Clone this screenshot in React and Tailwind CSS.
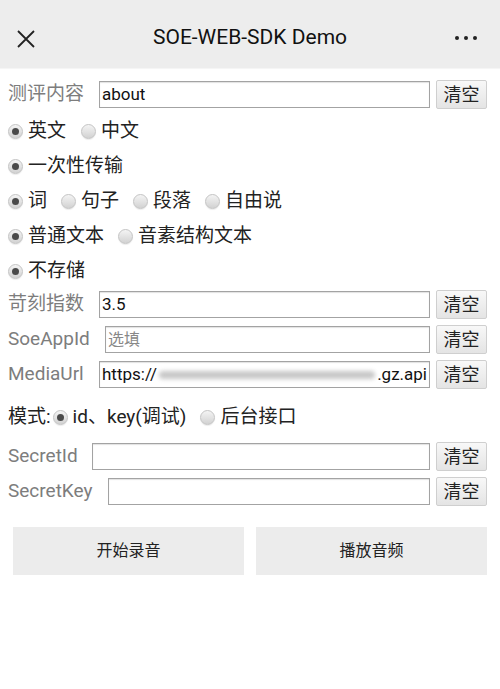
const font = "font-['Roboto','Noto_Sans_CJK_SC',sans-serif]";

const Radio = ({ checked }) => (
  <span className="mr-[5px] flex h-[15px] w-[15px] shrink-0 items-center justify-center rounded-full border border-[#c4c4c4] bg-gradient-to-b from-[#f4f4f4] to-[#d2d2d2] shadow-[0_1px_1px_rgba(0,0,0,0.08)]">
    {checked && <span className="h-[7px] w-[7px] rounded-full bg-[#4a4a4a]" />}
  </span>
);

const Option = ({ checked, children, className = "" }) => (
  <span className={`flex items-center ${className}`}>
    <Radio checked={checked} />
    <span>{children}</span>
  </span>
);

const ClearButton = () => (
  <button className="ml-[6px] h-[29px] w-[51px] shrink-0 rounded-[2px] border border-[#cfcfcf] bg-gradient-to-b from-[#f8f8f8] to-[#e4e4e4] text-[18px] leading-none text-[#222]">
    清空
  </button>
);

const Field = ({ label, labelWidth, children }) => (
  <div className="flex h-[35px] items-center pl-[8px] pr-[13px]">
    <span className={`shrink-0 text-[19px] text-[#7d7d7d] ${labelWidth}`}>{label}</span>
    <div className="flex h-[27px] min-w-0 flex-1 items-center overflow-hidden border border-[#a3a3a3] bg-white px-[2px] text-[17px] text-[#111] shadow-[inset_0_1px_1px_rgba(0,0,0,0.12)]">
      {children}
    </div>
    <ClearButton />
  </div>
);

const RadioRow = ({ children, className = "h-[35px]" }) => (
  <div className={`flex items-center pl-[8px] pt-[3px] ${className}`}>{children}</div>
);

export default function App() {
  return (
    <div className={`min-h-[689px] w-[500px] bg-white ${font}`}>
      <header className="relative flex h-[68px] items-center justify-center bg-[#ededed] pt-[7px] shadow-[0_1px_1px_rgba(0,0,0,0.04)]">
        <svg className="absolute left-[16px] top-[29px]" width="20" height="20" viewBox="0 0 20 20">
          <path d="M2 2 L18 18 M18 2 L2 18" stroke="#222" strokeWidth="1.8" fill="none" />
        </svg>
        <h1 className="text-[21px] text-[#111]">SOE-WEB-SDK Demo</h1>
        <div className="absolute right-[23px] top-[36px] flex gap-[5px]">
          <span className="h-[4px] w-[4px] rounded-full bg-[#222]" />
          <span className="h-[4px] w-[4px] rounded-full bg-[#222]" />
          <span className="h-[4px] w-[4px] rounded-full bg-[#222]" />
        </div>
      </header>

      <main className="pt-[9px] text-[19px] text-[#222]">
        <Field label="测评内容" labelWidth="w-[91px]">about</Field>

        <RadioRow>
          <Option checked className="mr-[15px]">英文</Option>
          <Option>中文</Option>
        </RadioRow>
        <RadioRow>
          <Option checked>一次性传输</Option>
        </RadioRow>
        <RadioRow>
          <Option checked className="mr-[14px]">词</Option>
          <Option className="mr-[14px]">句子</Option>
          <Option className="mr-[14px]">段落</Option>
          <Option>自由说</Option>
        </RadioRow>
        <RadioRow>
          <Option checked className="mr-[14px]">普通文本</Option>
          <Option>音素结构文本</Option>
        </RadioRow>
        <RadioRow>
          <Option checked>不存储</Option>
        </RadioRow>

        <Field label="苛刻指数" labelWidth="w-[91px]">3.5</Field>
        <Field label="SoeAppId" labelWidth="w-[97px]">
          <span className="text-[16px] text-[#888]">选填</span>
        </Field>
        <Field label="MediaUrl" labelWidth="w-[91px]">
          <span className="shrink-0">https://</span>
          <span className="mx-[2px] h-[8px] flex-1 rounded-full bg-[#c8c8c8] blur-[2px]" />
          <span className="shrink-0">.gz.api</span>
        </Field>

        <RadioRow className="h-[47px]">
          <span className="mr-[2px]">模式:</span>
          <Option checked className="mr-[14px]">id、key(调试)</Option>
          <Option>后台接口</Option>
        </RadioRow>

        <Field label="SecretId" labelWidth="w-[84px]" />
        <Field label="SecretKey" labelWidth="w-[100px]" />

        <div className="mt-[18px] grid grid-cols-2 gap-[12px] px-[13px]">
          <button className="h-[48px] bg-[#ececec] text-[16px] text-[#222]">开始录音</button>
          <button className="h-[48px] bg-[#ececec] text-[16px] text-[#222]">播放音频</button>
        </div>
      </main>
    </div>
  );
}
